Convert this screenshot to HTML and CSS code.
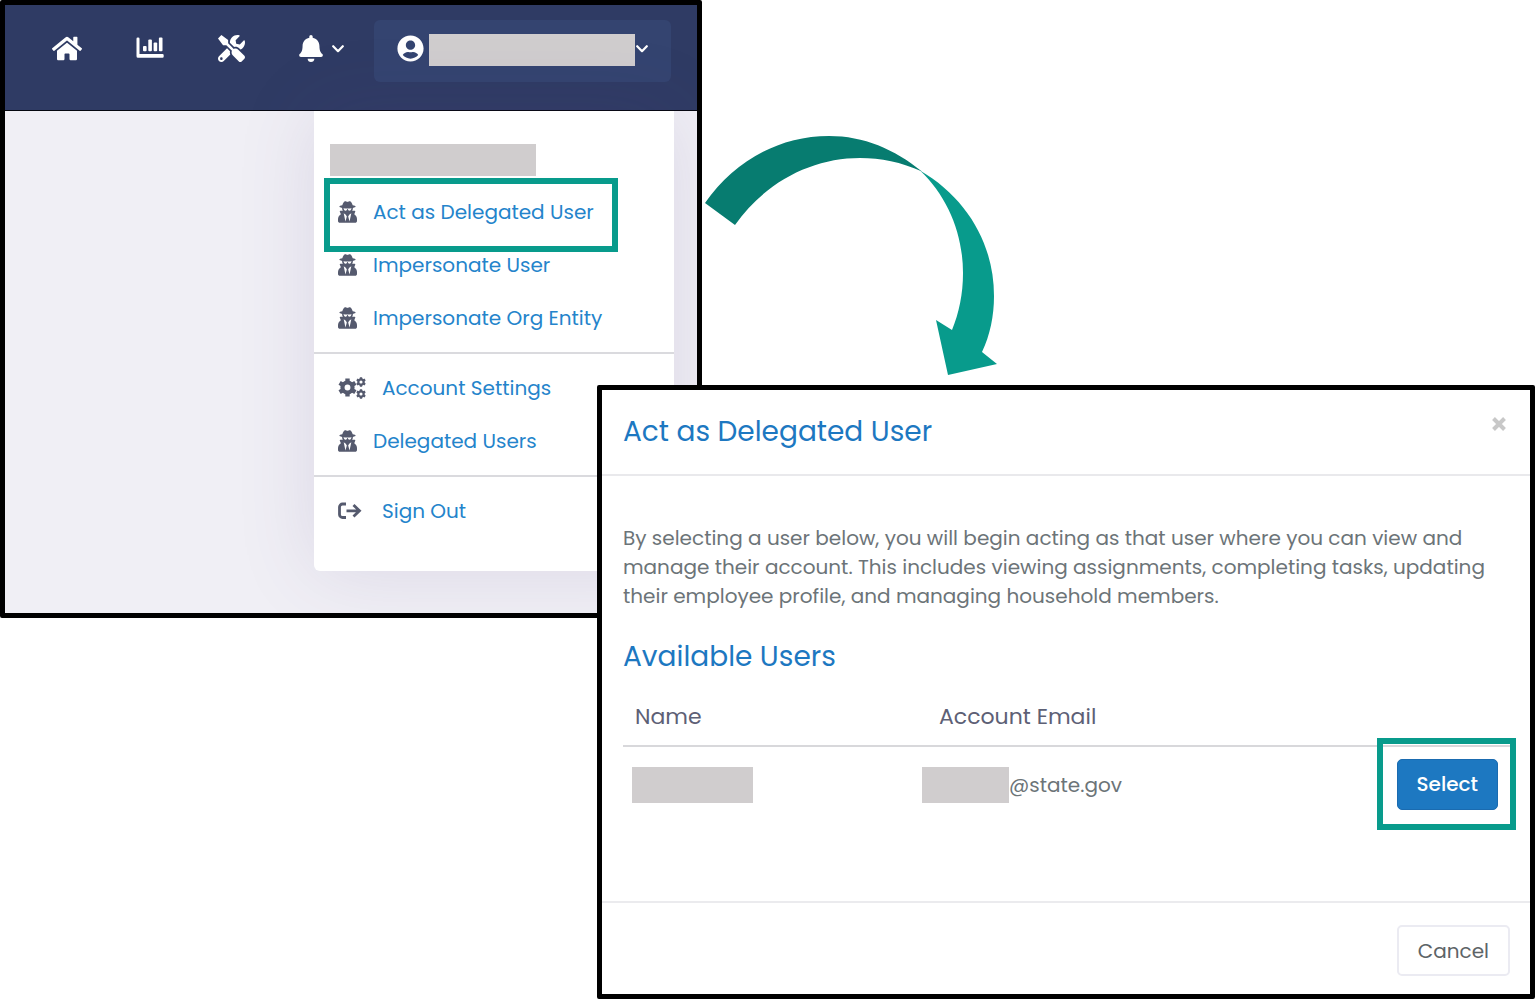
FILE: index.html
```html
<!DOCTYPE html>
<html lang="en">
<head>
    <meta charset="UTF-8">
    <meta name="viewport" content="width=device-width, initial-scale=1.0">
    <title>Act as Delegated User</title>
    <link rel="stylesheet" href="styles.css">
</head>
<body>
    <!-- shared icons -->
    <svg class="sprite" aria-hidden="true">
        <symbol id="icon-secret" viewBox="0 0 448 512">
            <path d="M383.9 308.3l23.9-62.6c4-10.5-3.7-21.7-15-21.7h-58.5c11-18.9 17.8-40.6 17.8-64v-.3c39.2-7.8 64-19.1 64-31.7 0-13.3-27.3-25.1-70.1-33-9.2-32.8-27-65.8-40.6-82.8-9.5-11.9-25.9-15.6-39.5-8.8l-27.6 13.8c-9 4.5-19.6 4.5-28.6 0L182.1 3.4c-13.6-6.8-30-3.1-39.5 8.8-13.5 17-31.4 50-40.6 82.8-42.7 7.9-70 19.7-70 33 0 12.6 24.8 23.9 64 31.7v.3c0 23.4 6.8 45.1 17.8 64H56.3c-11.5 0-19.2 11.7-14.7 22.3l25.8 60.2C27.3 329.8 0 372.7 0 422.4v44.8C0 491.9 20.1 512 44.8 512h358.4c24.7 0 44.8-20.1 44.8-44.8v-44.8c0-48.4-25.8-90.4-64.1-114.1zM176 480l-41.6-192 49.6 32 24 40-32 120zm96 0l-32-120 24-40 49.6-32L272 480zm41.7-298.5c-3.9 11.9-7 24.6-16.5 33.4-10.1 9.3-48 22.4-64-25-2.8-8.4-15.4-8.4-18.3 0-17 50.2-56 32.4-64 25-9.5-8.8-12.7-21.5-16.5-33.4-.8-2.5-6.3-5.7-6.3-5.8v-10.8c28.3 3.6 61 5.8 96 5.8s67.7-2.1 96-5.8v10.8c-.1.1-5.6 3.2-6.4 5.8z"/>
        </symbol>
        <symbol id="icon-chevron" viewBox="0 0 12 8">
            <path d="M1.2 1.2L6 6.2l4.8-5" fill="none" stroke="currentColor" stroke-width="2.2" stroke-linecap="round" stroke-linejoin="round"/>
        </symbol>
        <symbol id="icon-gear" viewBox="-10 -10 20 20">
            <circle r="5.3" fill="none" stroke="currentColor" stroke-width="4.4"/>
            <g stroke="currentColor" stroke-width="4.6" stroke-linejoin="round">
                <path d="M0-9.6V-6M0 6v3.6M8.3-4.8L5.2-3M-5.2 3l-3.1 1.8M8.3 4.8L5.2 3M-5.2-3l-3.1-1.8"/>
            </g>
        </symbol>
    </svg>

    <main class="stage">
        <section class="app">
            <header class="navbar">
                <nav class="nav-links">
                    <a href="#" aria-label="Home">
                        <svg width="30" height="27" viewBox="0 0 576 512"><path d="M280.37 148.26L96 300.11V464a16 16 0 0 0 16 16l112.06-.29a16 16 0 0 0 15.92-16V368a16 16 0 0 1 16-16h64a16 16 0 0 1 16 16v95.64a16 16 0 0 0 16 16.05L464 480a16 16 0 0 0 16-16V300L295.67 148.26a12.19 12.19 0 0 0-15.3 0zM571.6 251.47L488 182.56V44.05a12 12 0 0 0-12-12h-56a12 12 0 0 0-12 12v72.61L318.47 43a48 48 0 0 0-61 0L4.34 251.47a12 12 0 0 0-1.6 16.9l25.5 31A12 12 0 0 0 45.15 301l235.22-193.74a12.19 12.19 0 0 1 15.3 0L530.9 301a12 12 0 0 0 16.9-1.6l25.5-31a12 12 0 0 0-1.7-16.93z"/></svg>
                    </a>
                    <a href="#" aria-label="Reports">
                        <svg width="28" height="22" viewBox="0 0 28 22"><path d="M1.8.5h.4a1.3 1.3 0 0 1 1.3 1.3V17h23a1.2 1.2 0 0 1 1.2 1.2v1.3a1.2 1.2 0 0 1-1.2 1.2H2a1.5 1.5 0 0 1-1.500-1.500V1.800A1.300 1.300 0 0 1 1.800.5z"/><rect x="7" y="9" width="3.6" height="5.3" rx="1"/><rect x="12.3" y="2.5" width="3.6" height="11.8" rx="1"/><rect x="17.6" y="5.5" width="3.6" height="8.8" rx="1"/><rect x="22.9" y=".5" width="3.6" height="13.8" rx="1"/></svg>
                    </a>
                    <a href="#" aria-label="Tools">
                        <svg width="27" height="27" viewBox="0 0 512 512"><path d="M501.1 395.7L384 278.6c-23.1-23.1-57.6-27.6-85.4-13.9L192 158.1V96L64 0 0 64l96 128h62.1l106.6 106.6c-13.6 27.8-9.2 62.3 13.9 85.4l117.1 117.1c14.6 14.6 38.2 14.6 52.7 0l52.7-52.7c14.5-14.6 14.5-38.2 0-52.7zM331.7 225c28.3 0 54.9 11 74.9 31l19.4 19.4c15.8-6.9 30.8-16.5 43.8-29.5 37.1-37.1 49.7-89.3 37.9-136.7-2.2-9-13.5-12.1-20.1-5.5l-74.4 74.4-67.9-11.3L334 98.9l74.4-74.4c6.6-6.6 3.4-17.9-5.7-20.2-47.4-11.7-99.6.9-136.6 37.9-28.5 28.5-41.9 66.1-41.2 103.6l82.1 82.1c8.1-1.9 16.5-2.9 24.7-2.9zm-103.9 82l-56.7-56.7L18.7 402.8c-25 25-25 65.5 0 90.5s65.5 25 90.5 0l123.6-123.6c-7.6-19.9-9.9-41.6-5-62.7zM64 472c-13.2 0-24-10.8-24-24 0-13.3 10.7-24 24-24s24 10.7 24 24c0 13.2-10.7 24-24 24z"/></svg>
                    </a>
                    <a href="#" aria-label="Notifications">
                        <svg width="24" height="27" viewBox="0 0 448 512"><path d="M224 512c35.32 0 63.97-28.65 63.97-64H160.03c0 35.35 28.65 64 63.97 64zm215.39-149.71c-19.32-20.76-55.47-51.99-55.47-154.29 0-77.7-54.48-139.9-127.94-155.16V32c0-17.67-14.32-32-31.98-32s-31.98 14.33-31.98 32v20.84C118.56 68.1 64.08 130.3 64.08 208c0 102.3-36.15 133.53-55.47 154.29-6 6.45-8.66 14.16-8.61 21.71.11 16.4 12.98 32 32.1 32h383.8c19.12 0 32-15.6 32.1-32 .05-7.55-2.61-15.27-8.61-21.71z"/></svg>
                        <svg class="chevron" width="12" height="8"><use href="#icon-chevron"/></svg>
                    </a>
                </nav>
                <button type="button" class="user-button" aria-label="User menu">
                    <svg width="27" height="27" viewBox="0 0 496 512"><path d="M248 8C111 8 0 119 0 256s111 248 248 248 248-111 248-248S385 8 248 8zm0 96c48.6 0 88 39.4 88 88s-39.4 88-88 88-88-39.4-88-88 39.4-88 88-88zm0 344c-58.7 0-111.3-26.6-146.5-68.2 18.8-35.4 55.6-59.8 98.5-59.8 2.4 0 4.8.4 7.1 1.1 13 4.2 26.6 6.9 40.9 6.9 14.3 0 28-2.7 40.9-6.9 2.3-.7 4.7-1.1 7.1-1.1 42.9 0 79.7 24.4 98.5 59.8C359.3 421.4 306.7 448 248 448z"/></svg>
                    <span class="redacted redacted-user"></span>
                    <svg class="chevron" width="12" height="8"><use href="#icon-chevron"/></svg>
                </button>
            </header>
            <div class="app-body">
                <div class="menu">
                    <span class="redacted redacted-user"></span>
                    <ul class="menu-list">
                        <li class="highlight"><a href="#"><svg width="19" height="22"><use href="#icon-secret"/></svg>Act as Delegated User</a></li>
                        <li><a href="#"><svg width="19" height="22"><use href="#icon-secret"/></svg>Impersonate User</a></li>
                        <li><a href="#"><svg width="19" height="22"><use href="#icon-secret"/></svg>Impersonate Org Entity</a></li>
                    </ul>
                    <ul class="menu-list">
                        <li><a href="#"><svg width="28" height="22"><use href="#icon-gear" x="0" y="1" width="19" height="19"/><use href="#icon-gear" x="18" y="0" width="10" height="10"/><use href="#icon-gear" x="18" y="12" width="10" height="10"/></svg>Account Settings</a></li>
                        <li><a href="#"><svg width="19" height="22"><use href="#icon-secret"/></svg>Delegated Users</a></li>
                    </ul>
                    <ul class="menu-list">
                        <li><a href="#"><svg width="28" height="22" viewBox="0 0 28 22"><path d="M8 4H4.500A3 3 0 0 0 1.500 7v7.500a3 3 0 0 0 3 3H8M8.500 10.800H21M15.500 5l6 5.800-6 5.800" fill="none" stroke="currentColor" stroke-width="2.8"/></svg>Sign Out</a></li>
                    </ul>
                </div>
            </div>
        </section>

        <svg class="arrow" width="292" height="240" viewBox="0 0 292 240" aria-hidden="true">
            <path class="arrow-tail" d="M0 67C28 27 72 0 124 0c35 0 65 13 93 35.500C196 26 176 22 155 22 108 22 61 45 30 89z"/>
            <path class="arrow-head" d="M215 34.500C262 62 289 108 289 160c0 20-4 39-12 56l15 12-49 11-12-55 16 10c7-17 11-36 11-57 0-39-15-76-43-102.500z"/>
        </svg>

        <section class="modal" role="dialog" aria-labelledby="modal-title">
            <header class="modal-header">
                <h1 id="modal-title">Act as Delegated User</h1>
                <button type="button" class="close" aria-label="Close">
                    <svg width="16" height="16" viewBox="0 0 16 16"><path d="M2.500 2.500l11 11M13.500 2.500l-11 11" stroke="currentColor" stroke-width="4"/></svg>
                </button>
            </header>
            <div class="modal-body">
                <p>By selecting a user below, you will begin acting as that user where you can view and manage their account. This includes viewing assignments, completing tasks, updating their employee profile, and managing household members.</p>
                <h2>Available Users</h2>
                <table>
                    <thead>
                        <tr>
                            <th class="col-name">Name</th>
                            <th class="col-email">Account Email</th>
                            <th class="col-action"></th>
                        </tr>
                    </thead>
                    <tbody>
                        <tr>
                            <td><span class="redacted redacted-name"></span></td>
                            <td><div class="email"><span class="redacted redacted-email"></span>@state.gov</div></td>
                            <td class="col-action"><span class="highlight"><button type="button" class="btn btn-primary">Select</button></span></td>
                        </tr>
                    </tbody>
                </table>
            </div>
            <footer class="modal-footer">
                <button type="button" class="btn btn-light">Cancel</button>
            </footer>
        </section>
    </main>
</body>
</html>
```
FILE: styles.css
```css
*,
*::after {
    box-sizing: border-box;
    margin: 0;
    padding: 0;
}
body {
    font-family: 'Poppins', 'Inter', sans-serif;
    font-size: 20px;
    color: #6c7478;
    background: #fff;
}
svg {
    display: block;
    flex: none;
    fill: currentColor;
}
a {
    text-decoration: none;
}
button {
    font: inherit;
    cursor: pointer;
}
.sprite {
    position: absolute;
    width: 0;
    height: 0;
}

/* the two windows overlap in the middle cell of the grid */
.stage {
    display: grid;
    grid-template-columns: 597fr 105fr 833fr;
    grid-template-rows: 385px 233px 1fr;
    min-height: 100vh;
}
.app,
.modal {
    display: flex;
    flex-direction: column;
    border: 5px solid #000;
    border-radius: 2px;
}
.app {
    grid-area: 1 / 1 / 3 / 3;
    overflow: hidden;
    background: #f0eff5;
}
.modal {
    grid-area: 2 / 2 / 4 / 4;
    z-index: 1;
    background: #fff;
}

.redacted {
    display: block;
    flex: none;
    background: #d0cdce;
}
.redacted-user {
    width: 206px;
    height: 32px;
}
.redacted-name {
    width: 121px;
    height: 36px;
}
.redacted-email {
    width: 87px;
    height: 36px;
}

/* navbar */
.navbar {
    display: flex;
    justify-content: flex-end;
    gap: 30px;
    padding: 15px 26px 28px;
    color: #fff;
    background: #2f3b64;
    border-bottom: 1px solid #05070f;
}
.nav-links {
    display: flex;
    align-items: center;
    gap: 54px;
    padding-bottom: 6px;
}
.nav-links a {
    display: flex;
    align-items: center;
    gap: 9px;
    color: #fff;
}
.chevron {
    margin-top: 2px;
}
.user-button {
    display: flex;
    align-items: center;
    height: 62px;
    padding: 0 23px 6px;
    color: #fff;
    background: #344470;
    border: none;
    border-radius: 6px;
}
.user-button .redacted {
    margin: 4px 1px 0 5px;
}

/* user menu */
.app-body {
    display: flex;
    flex: 1;
    justify-content: flex-end;
    align-items: flex-start;
    padding-right: 23px;
}
.menu {
    width: 360px;
    padding: 33px 0 34px;
    background: #fff;
    border-radius: 0 0 6px 6px;
    box-shadow: 0 0 80px rgba(82, 63, 135, 0.13);
}
.menu > .redacted {
    margin: 0 16px 9px;
}
.menu-list {
    list-style: none;
}
.menu-list + .menu-list {
    margin-top: 8px;
    padding-top: 7px;
    border-top: 2px solid #dadade;
}
.menu-list a {
    display: flex;
    align-items: center;
    gap: 16px;
    height: 53px;
    padding-left: 24px;
    color: #2484cb;
}
.menu-list svg {
    color: #555a6e;
}

/* teal callout frame around an element */
.highlight {
    position: relative;
}
.highlight::after {
    content: "";
    position: absolute;
    border: 6px solid #089b8c;
    pointer-events: none;
}
.menu-list .highlight::after {
    top: -7px;
    left: 10px;
    width: 294px;
    height: 74px;
}
.col-action .highlight::after {
    inset: -21px -18px -20px -20px;
}

.arrow {
    grid-area: 1 / 3;
    margin: 136px 0 0 3px;
}
.arrow-tail {
    fill: #077c70;
}
.arrow-head {
    fill: #089b8c;
}

/* modal */
.modal-header {
    display: flex;
    justify-content: space-between;
    align-items: flex-start;
    padding: 20px 23px 20px 21px;
    border-bottom: 2px solid #e9e9ec;
}
h1,
h2 {
    font-size: 28px;
    font-weight: 400;
    line-height: 44px;
    color: #1d78c1;
}
.close {
    margin-top: 6px;
    color: #c8c8c8;
    background: none;
    border: none;
}
.modal-body {
    flex: 1;
    padding: 48px 20px 0 21px;
}
.modal-body p {
    line-height: 29px;
}
.modal-body h2 {
    margin-top: 24px;
}
table {
    width: 100%;
    margin-top: 8px;
    border-collapse: collapse;
}
th {
    height: 59px;
    padding: 0 12px;
    font-size: 22px;
    font-weight: 400;
    text-align: left;
    color: #5d6075;
    border-bottom: 2px solid #d8d8db;
}
td {
    height: 76px;
    padding: 0 12px 0 9px;
}
.col-name {
    width: 304px;
}
/* the mask starts left of the column's text */
.email {
    display: flex;
    align-items: center;
    margin-left: -14px;
}
.col-action {
    text-align: right;
}
td.col-action .highlight {
    display: inline-block;
    vertical-align: middle;
}
.btn {
    display: block;
    height: 51px;
    padding: 0 19px;
    border: 1px solid transparent;
    border-radius: 5px;
}
.btn-primary {
    padding-bottom: 2px;
    font-weight: 500;
    color: #fff;
    background: #1d78c1;
    border-color: #1a6bb0;
}
.btn-light {
    color: #5d6467;
    background: #fff;
    border: 2px solid #ebebf2;
}
.modal-footer {
    display: flex;
    justify-content: flex-end;
    padding: 22px 20px 18px;
    border-top: 2px solid #ebebee;
}
```
